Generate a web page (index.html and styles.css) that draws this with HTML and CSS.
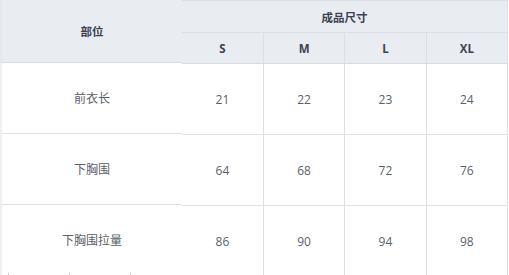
FILE: index.html
```html
<!DOCTYPE html>
<html lang="zh">
<head>
<meta charset="utf-8">
<link rel="stylesheet" href="styles.css">
</head>
<body>
<div class="wrap">
  <table class="fixed">
    <thead>
      <tr><th class="h-part">部位</th></tr>
    </thead>
    <tbody>
      <tr><td>前衣长</td></tr>
      <tr><td>下胸围</td></tr>
      <tr><td>下胸围拉量</td></tr>
    </tbody>
  </table>
  <table class="main">
    <thead>
      <tr><th colspan="4" class="h-top">成品尺寸</th></tr>
      <tr class="sizes"><th>S</th><th>M</th><th>L</th><th>XL</th></tr>
    </thead>
    <tbody>
      <tr><td>21</td><td>22</td><td>23</td><td>24</td></tr>
      <tr><td>64</td><td>68</td><td>72</td><td>76</td></tr>
      <tr><td>86</td><td>90</td><td>94</td><td>98</td></tr>
    </tbody>
  </table>
</div>
<div class="ticks"><span></span><span></span><span></span></div>
</body>
</html>
```
FILE: styles.css
```css
html, body {
  margin: 0;
  padding: 0;
  background: #ffffff;
  overflow: hidden;
}
body {
  width: 509px;
  height: 275px;
  position: relative;
  font-family: "Open Sans", "Noto Sans CJK SC", sans-serif;
}
.wrap {
  display: flex;
  align-items: flex-start;
  width: 509px;
}
table {
  border-collapse: collapse;
  border-spacing: 0;
  table-layout: fixed;
}
th, td {
  padding: 0;
  text-align: center;
  vertical-align: middle;
}
th {
  background: #e9ecf1;
  color: #3d4250;
  font-weight: 700;
  font-size: 11.5px;
}
td {
  color: #5b5f69;
  font-size: 12px;
}
.fixed {
  width: 182px;
}
.fixed th {
  height: 62px;
  border-bottom: 1px solid #d8dbe2;
  border-left: 2px solid #e6e8ec;
}
.fixed td {
  height: 70px;
  border-bottom: 1px solid #dfe1e6;
  border-left: 2px solid #eef0f3;
}
.main {
  width: 326px;
}
.main th, .main td {
  border-right: 1px solid #dcdfe6;
}
.main .h-top {
  height: 31px;
  border-top: 1px solid #dcdfe6;
  border-bottom: 1px solid #dcdfe6;
}
.main .sizes th {
  height: 30px;
  border-bottom: 1px solid #d8dbe2;
}
.main td {
  height: 70px;
  border-bottom: 1px solid #dfe1e6;
}
.ticks {
  position: absolute;
  left: 8px;
  top: 273px;
  display: flex;
  gap: 60px;
}
.ticks span {
  width: 1px;
  height: 2px;
  background: #c9ccd3;
}
```
